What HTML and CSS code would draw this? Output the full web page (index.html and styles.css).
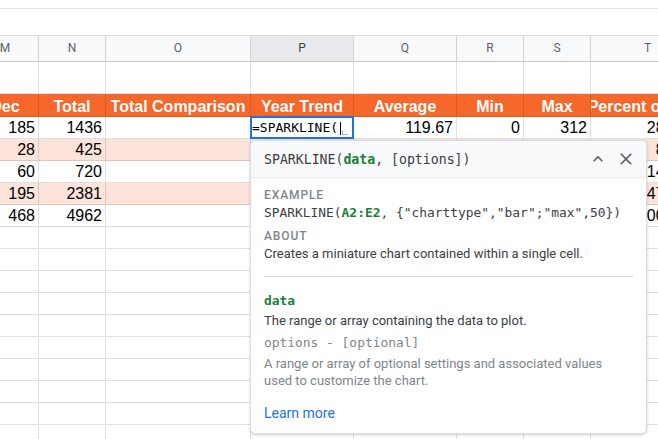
FILE: index.html
```html
<!DOCTYPE html>
<html>
<head>
<meta charset="utf-8">
<link rel="stylesheet" href="styles.css">
</head>
<body>
<div class="sheet">
  <div class="topbar"></div>
  <div class="spacer"></div>
  <div class="grid">
    <div class="row colhead">
      <div class="cell">M</div><div class="cell">N</div><div class="cell">O</div><div class="cell sel">P</div><div class="cell">Q</div><div class="cell">R</div><div class="cell">S</div><div class="cell">T</div>
    </div>
    <div class="row tall">
      <div class="cell"></div><div class="cell"></div><div class="cell"></div><div class="cell"></div><div class="cell"></div><div class="cell"></div><div class="cell"></div><div class="cell"></div>
    </div>
    <div class="row head">
      <div class="cell">Dec</div><div class="cell">Total</div><div class="cell">Total Comparison</div><div class="cell">Year Trend</div><div class="cell">Average</div><div class="cell">Min</div><div class="cell">Max</div><div class="cell">Percent of Total</div>
    </div>
    <div class="row">
      <div class="cell">185</div><div class="cell">1436</div><div class="cell"></div>
      <div class="cell edit"><div class="editbox"><span class="edit-text">=SPARKLINE(</span><span class="caret"></span><span class="hint"></span></div></div>
      <div class="cell">119.67</div><div class="cell">0</div><div class="cell">312</div><div class="cell">28.94%</div>
    </div>
    <div class="row pink">
      <div class="cell">28</div><div class="cell">425</div><div class="cell"></div><div class="cell"></div><div class="cell"></div><div class="cell"></div><div class="cell"></div><div class="cell">8.57%</div>
    </div>
    <div class="row">
      <div class="cell">60</div><div class="cell">720</div><div class="cell"></div><div class="cell"></div><div class="cell"></div><div class="cell"></div><div class="cell"></div><div class="cell">14.51%</div>
    </div>
    <div class="row pink">
      <div class="cell">195</div><div class="cell">2381</div><div class="cell"></div><div class="cell"></div><div class="cell"></div><div class="cell"></div><div class="cell"></div><div class="cell">47.98%</div>
    </div>
    <div class="row">
      <div class="cell">468</div><div class="cell">4962</div><div class="cell"></div><div class="cell"></div><div class="cell"></div><div class="cell"></div><div class="cell"></div><div class="cell">100.00%</div>
    </div>
    <div class="row"><div class="cell"></div><div class="cell"></div><div class="cell"></div><div class="cell"></div><div class="cell"></div><div class="cell"></div><div class="cell"></div><div class="cell"></div></div>
    <div class="row"><div class="cell"></div><div class="cell"></div><div class="cell"></div><div class="cell"></div><div class="cell"></div><div class="cell"></div><div class="cell"></div><div class="cell"></div></div>
    <div class="row"><div class="cell"></div><div class="cell"></div><div class="cell"></div><div class="cell"></div><div class="cell"></div><div class="cell"></div><div class="cell"></div><div class="cell"></div></div>
    <div class="row"><div class="cell"></div><div class="cell"></div><div class="cell"></div><div class="cell"></div><div class="cell"></div><div class="cell"></div><div class="cell"></div><div class="cell"></div></div>
    <div class="row"><div class="cell"></div><div class="cell"></div><div class="cell"></div><div class="cell"></div><div class="cell"></div><div class="cell"></div><div class="cell"></div><div class="cell"></div></div>
    <div class="row"><div class="cell"></div><div class="cell"></div><div class="cell"></div><div class="cell"></div><div class="cell"></div><div class="cell"></div><div class="cell"></div><div class="cell"></div></div>
    <div class="row"><div class="cell"></div><div class="cell"></div><div class="cell"></div><div class="cell"></div><div class="cell"></div><div class="cell"></div><div class="cell"></div><div class="cell"></div></div>
    <div class="row"><div class="cell"></div><div class="cell"></div><div class="cell"></div><div class="cell"></div><div class="cell"></div><div class="cell"></div><div class="cell"></div><div class="cell"></div></div>
    <div class="row"><div class="cell"></div><div class="cell"></div><div class="cell"></div><div class="cell"></div><div class="cell"></div><div class="cell"></div><div class="cell"></div><div class="cell"></div></div>
    <div class="row"><div class="cell"></div><div class="cell"></div><div class="cell"></div><div class="cell"></div><div class="cell"></div><div class="cell"></div><div class="cell"></div><div class="cell"></div></div>
  </div>
</div>

<div class="popup">
  <div class="pop-head">
    <div class="sig">SPARKLINE(<b class="arg">data</b>, [options])</div>
    <svg class="icon" width="20" height="20" viewBox="0 0 24 24"><path d="M12 8l-6 6 1.41 1.41L12 10.83l4.59 4.58L18 14z"/></svg>
    <svg class="icon" width="20" height="20" viewBox="0 0 24 24"><path d="M19 6.41L17.59 5 12 10.59 6.41 5 5 6.41 10.59 12 5 17.59 6.41 19 12 13.41 17.59 19 19 17.59 13.41 12z"/></svg>
  </div>
  <div class="pop-body">
    <div class="label">EXAMPLE</div>
    <div class="code">SPARKLINE(<b class="arg">A2:E2</b>, {"charttype","bar";"max",50})</div>
    <div class="label about">ABOUT</div>
    <div class="text">Creates a miniature chart contained within a single cell.</div>
    <div class="divider"></div>
    <div class="code param arg">data</div>
    <div class="text desc">The range or array containing the data to plot.</div>
    <div class="code opt">options - [optional]</div>
    <div class="text muted">A range or array of optional settings and associated values<br>used to customize the chart.</div>
    <a class="learn">Learn more</a>
  </div>
</div>
</body>
</html>
```

FILE: styles.css
```css
html, body {
  margin: 0;
  padding: 0;
  width: 658px;
  height: 439px;
  overflow: hidden;
  background: #fff;
}

body {
  position: relative;
  font-family: "Liberation Sans", Arial, sans-serif;
}

.topbar {
  height: 8px;
  border-bottom: 1px solid #e0e0e0;
}

.spacer {
  height: 26px;
}

.grid {
  margin-left: -28px;
  width: 733px;
}

.row {
  display: grid;
  grid-template-columns: 67px 67px 145px 103px 103px 67px 67px 114px;
}

.cell {
  box-sizing: border-box;
  height: 22px;
  border-right: 1px solid rgba(0, 0, 0, 0.12);
  border-bottom: 1px solid rgba(0, 0, 0, 0.12);
  font-size: 16px;
  line-height: 21px;
  color: #000;
  padding: 0 3px 0 3px;
  text-align: right;
  white-space: nowrap;
  overflow: hidden;
}

.colhead {
  border-top: 1px solid #dadada;
}

.colhead .cell {
  height: 26px;
  background: #f8f9fa;
  border-right-color: #d3d3d3;
  border-bottom-color: #c8c8c8;
  font-family: Roboto, "Liberation Sans", sans-serif;
  font-size: 12px;
  line-height: 25px;
  color: #5f6368;
  text-align: center;
}

.colhead .cell.sel {
  background: #e8eaed;
  color: #3c4043;
}

.tall .cell {
  height: 32px;
}

.head .cell {
  background: #f5672b;
  color: #fff;
  font-weight: bold;
  display: flex;
  justify-content: center;
  padding: 2px 0 0 0;
  line-height: 21px;
  height: 23px;
}

.pink .cell {
  background: #fce4db;
}

.cell.edit {
  position: relative;
  overflow: visible;
  z-index: 2;
}

.editbox {
  position: absolute;
  left: -1px;
  top: -1px;
  right: -1px;
  bottom: -1px;
  border: 2px solid #1a73e8;
  background: #fff;
  display: flex;
  align-items: center;
  padding-top: 1px;
  box-sizing: border-box;
}

.edit-text {
  font-family: "DejaVu Sans Mono", "Liberation Mono", monospace;
  font-size: 13px;
  line-height: 16px;
  color: #000;
}

.caret {
  width: 1px;
  height: 13px;
  background: #000;
  margin-left: 2px;
}

.hint {
  align-self: flex-end;
  width: 5px;
  height: 4px;
  margin-left: 1px;
  margin-bottom: 2px;
  border-left: 1px solid #b0b4b8;
  border-bottom: 1px solid #b0b4b8;
}

/* popup */
.popup {
  position: absolute;
  left: 250px;
  top: 140px;
  width: 397px;
  box-sizing: border-box;
  background: #fff;
  border: 1px solid #dadce0;
  border-radius: 5px;
  box-shadow: 0 1px 3px rgba(60, 64, 67, 0.25);
  overflow: hidden;
  z-index: 5;
  font-family: Roboto, "Liberation Sans", sans-serif;
}

.pop-head {
  box-sizing: border-box;
  background: #f8f9fa;
  border-bottom: 1px solid #e8eaed;
  height: 37px;
  display: flex;
  align-items: center;
  padding: 0 10px 0 13px;
  gap: 8px;
}

.sig {
  flex: 1;
  font-family: "DejaVu Sans Mono", "Liberation Mono", monospace;
  font-size: 13.2px;
  color: #3c4043;
  white-space: nowrap;
}

.icon {
  fill: #5f6368;
  flex: none;
}

.pop-body {
  padding: 8px 13px 10px 13px;
}

.label {
  font-size: 12px;
  font-weight: 500;
  letter-spacing: 0.9px;
  line-height: 18px;
  color: #80868b;
}

.label.about {
  margin-top: 6px;
}

.code {
  font-family: "DejaVu Sans Mono", "Liberation Mono", monospace;
  font-size: 12.9px;
  line-height: 17px;
  color: #3c4043;
  white-space: nowrap;
}

.arg {
  color: #188038;
  font-weight: bold;
}

.text {
  font-size: 13px;
  line-height: 18px;
  color: #3c4043;
}

.divider {
  margin-top: 13px;
  height: 1px;
  background: #dadce0;
}

.param {
  margin-top: 15px;
  line-height: 18px;
}

.desc {
  margin-top: 2px;
}

.opt {
  margin-top: 4px;
  line-height: 18px;
  color: #80868b;
}

.muted {
  margin-top: 3px;
  line-height: 17px;
  color: #80868b;
}

.learn {
  display: block;
  margin-top: 14px;
  font-size: 14px;
  line-height: 20px;
  color: #1a73e8;
}
```
